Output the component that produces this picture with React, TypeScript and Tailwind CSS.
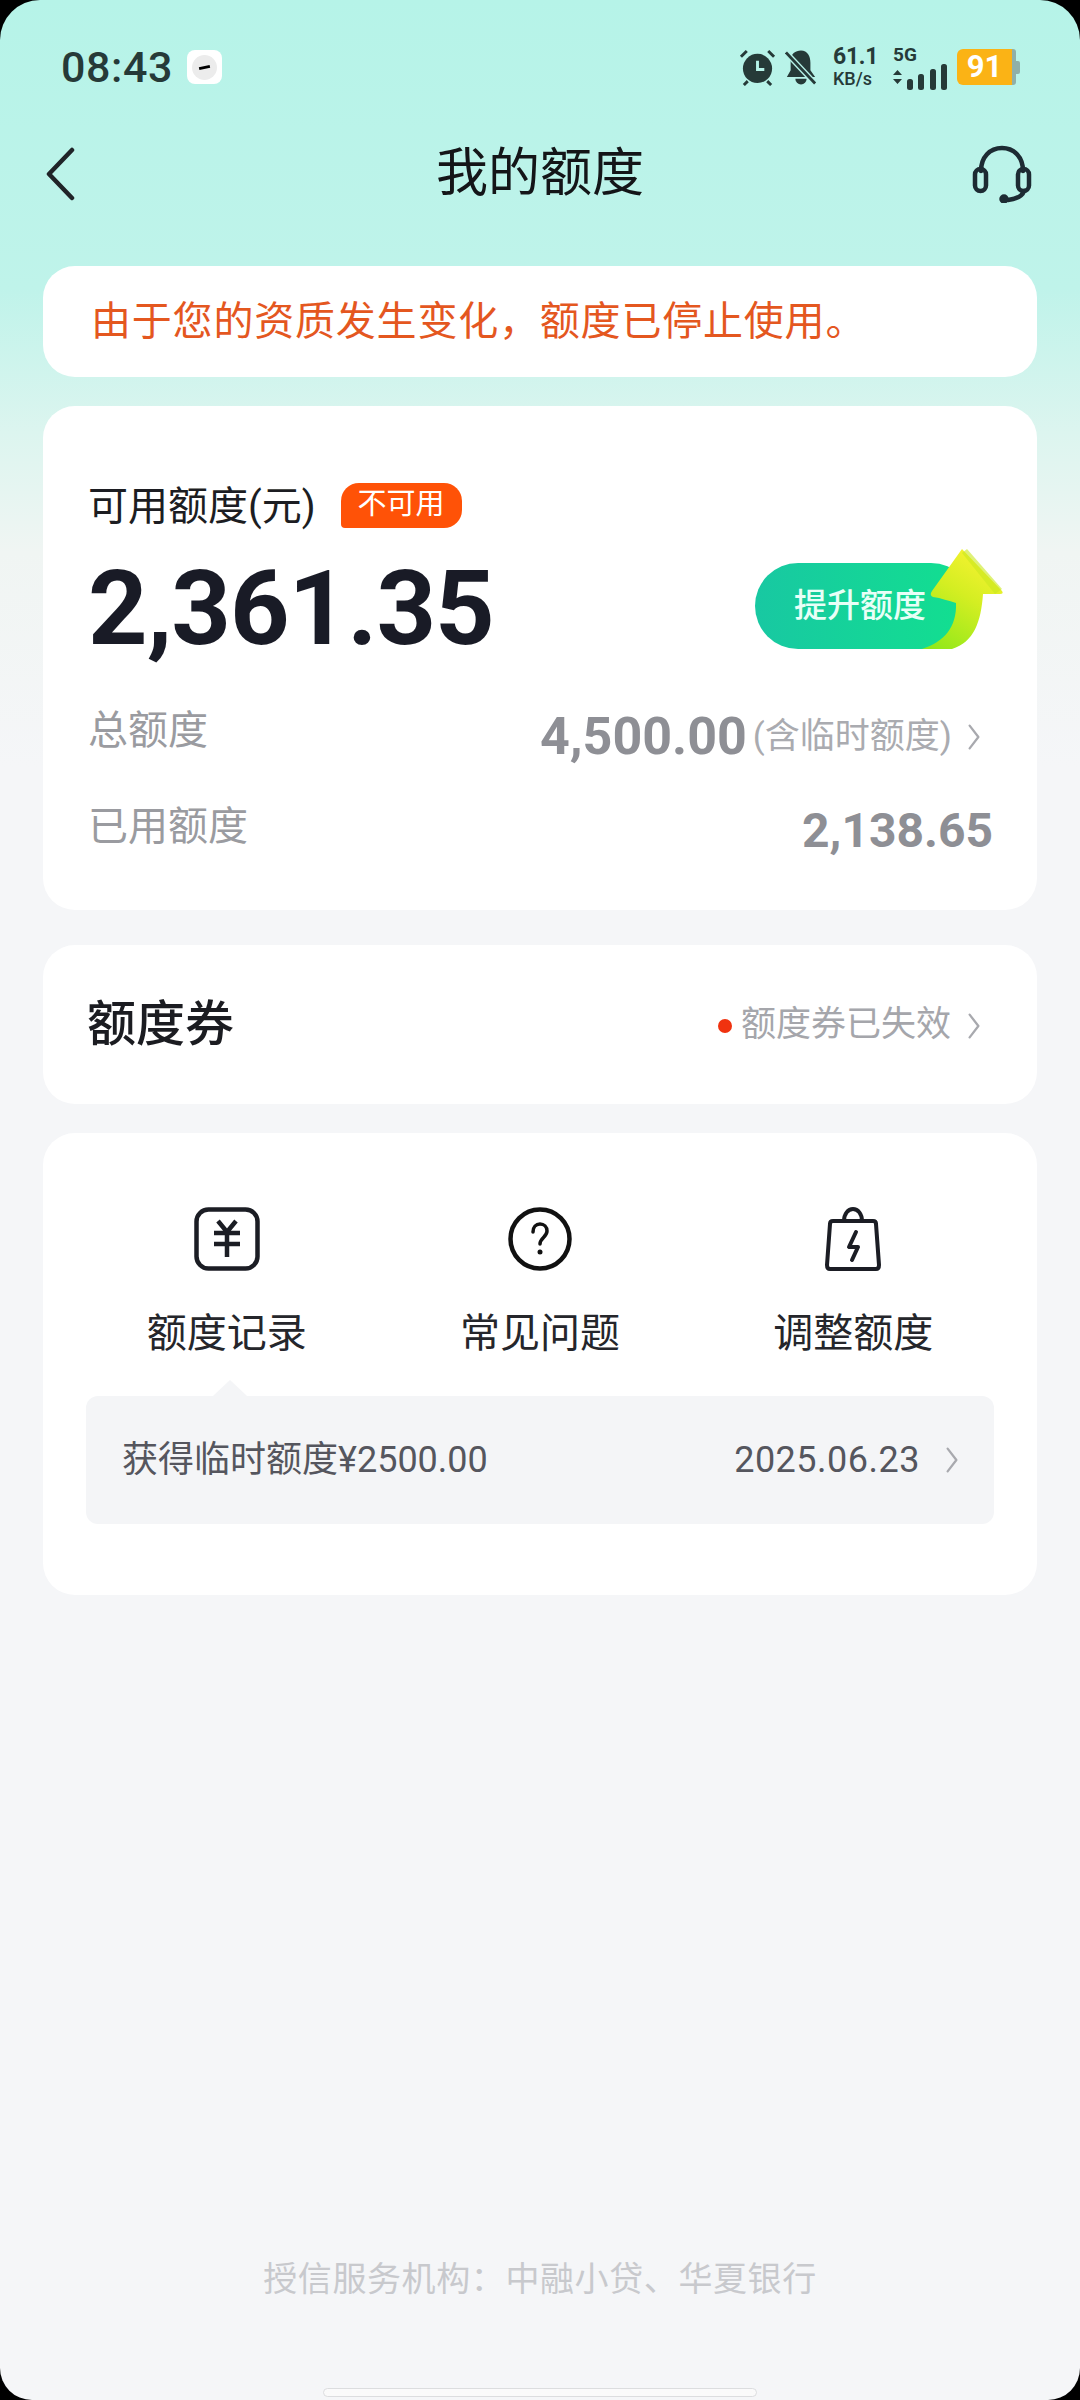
import React from 'react';

const CJK = "font-['Roboto','Noto_Sans_CJK_SC',sans-serif]";

const Chevron = ({ className }: { className: string }) => (
  <svg viewBox="0 0 16 32" fill="none" className={className}>
    <path d="M3 3 L13 16 L3 29" stroke="currentColor" strokeWidth="2.6" strokeLinecap="round" strokeLinejoin="round" />
  </svg>
);

const StatusBar = () => (
  <div className="h-[134px] pl-[61px] pr-[60px] pt-[44px] flex justify-between items-start text-[#263a38]">
    <div className="flex items-center gap-[14px] h-[46px]">
      <span className="text-[43px] leading-none font-medium tracking-[0.6px] font-['Roboto',sans-serif]">08:43</span>
      <div className="w-[35px] h-[34px] rounded-[8px] bg-white flex items-center justify-center">
        <div className="w-[25px] h-[25px] rounded-full bg-[#ececec] flex items-center justify-center">
          <div className="w-[11px] h-[3px] bg-black -rotate-12" />
        </div>
      </div>
    </div>
    <div className="flex items-center h-[46px]">
      <svg viewBox="0 0 38 38" className="w-[37px] h-[37px]">
        <circle cx="19" cy="20" r="15" fill="#263a38" />
        <path d="M19 12v9h7" stroke="#b6f3e8" strokeWidth="3" fill="none" />
        <path d="M2 8l6-6M36 8l-6-6M5 37l4-4M33 37l-4-4" stroke="#263a38" strokeWidth="3" />
      </svg>
      <svg viewBox="0 0 34 38" className="w-[32px] h-[37px] ml-[9px]">
        <path d="M17 1c7 0 10 6 10 13v8l5 7H2l4-7V11c0-6 5-10 11-10z" fill="#263a38" />
        <path d="M11 31h12a6 6 0 0 1-12 0z" fill="#263a38" />
        <path d="M1 3l31 33" stroke="#b6f3e8" strokeWidth="6" />
        <path d="M1 3l31 33" stroke="#263a38" strokeWidth="3" />
      </svg>
      <div className="ml-[16px] w-[43px] flex flex-col items-start font-['Roboto',sans-serif] font-bold">
        <span className="text-[23px] leading-[24px] tracking-[-0.3px]">61.1</span>
        <span className="text-[18px] leading-[20px] font-medium">KB/s</span>
      </div>
      <div className="ml-[17px] flex flex-col items-start font-['Roboto',sans-serif] font-bold">
        <span className="text-[19px] leading-[22px]">5G</span>
        <svg viewBox="0 0 55 26" className="w-[55px] h-[26px] -mt-[2px]">
          <path d="M0 11l4.500-5 4.500 5zM0 15l4.500 5 4.500-5z" fill="#263a38" />
          <rect x="14" y="15" width="6" height="11" rx="2.500" fill="#263a38" />
          <rect x="25" y="10" width="6" height="16" rx="2.500" fill="#263a38" />
          <rect x="37" y="5" width="6" height="21" rx="2.500" fill="#263a38" />
          <rect x="48" y="0" width="6" height="26" rx="2.500" fill="#263a38" />
        </svg>
      </div>
      <div className="ml-[9px] flex items-center">
        <div className="w-[55px] h-[36px] rounded-l-[6px] bg-[#fbb315] flex items-center justify-center text-white text-[31px] font-bold font-['Roboto',sans-serif]">91</div>
        <div className="w-[4px] h-[36px] bg-[#8fb0a8] rounded-r-[3px]" />
        <div className="w-[4px] h-[13px] bg-[#8fb0a8] rounded-r-[2px]" />
      </div>
    </div>
  </div>
);

const ToolEntry = ({ label, icon }: { label: string; icon: React.ReactNode }) => (
  <div className="flex flex-col items-center">
    <div className="h-[64px] flex items-center justify-center">{icon}</div>
    <span className="mt-[38px] text-[40px] leading-[50px] text-[#25262b]">{label}</span>
  </div>
);

export default function App() {
  return (
    <div className="bg-black w-[1080px] h-[2400px]">
      <div className={`relative w-[1080px] h-[2400px] overflow-hidden rounded-t-[40px] rounded-b-[32px] bg-[linear-gradient(180deg,#b6f3e8_0%,#bff3ea_12%,#dcf5ef_18%,#f0f5f3_23%,#f5f6f8_32%,#f5f6f8_100%)] ${CJK}`}>
        <StatusBar />

        {/* nav bar */}
        <div className="h-[76px] mt-[2px] flex items-center justify-between pl-[45px] pr-[48px] relative">
          <svg viewBox="0 0 30 54" className="w-[30px] h-[54px]">
            <path d="M27 3 L4 27 L27 51" stroke="#202428" strokeWidth="4.500" fill="none" strokeLinecap="round" strokeLinejoin="round" />
          </svg>
          <h1 className="absolute left-0 right-0 text-center text-[52px] leading-[76px] text-[#141518]">我的额度</h1>
          <svg viewBox="0 0 60 58" className="w-[60px] h-[58px]" fill="none" stroke="#1d2b33" strokeWidth="4.500" strokeLinecap="round">
            <path d="M9 26C9 12 18 3 30 3s21 9 21 23" />
            <rect x="3" y="24" width="11" height="22" rx="5.500" />
            <rect x="46" y="24" width="11" height="22" rx="5.500" />
            <path d="M52 46c-2 6-8 8-16 9" />
            <circle cx="32" cy="54" r="2.500" fill="#1d2b33" />
          </svg>
        </div>

        <div className="px-[43px] pt-[54px] flex flex-col">
          {/* notice */}
          <div className="h-[111px] rounded-[32px] bg-white flex items-center pl-[48px] text-[40px] tracking-[0.8px] text-[#e4571f]">
            由于您的资质发生变化，额度已停止使用。
          </div>

          {/* quota card */}
          <div className="mt-[29px] h-[504px] rounded-[32px] bg-white pl-[45px] pr-[44px] pt-[77px]">
            <div className="flex items-center h-[48px]">
              <span className="text-[40px] leading-[48px] text-[#1c1d22]">可用额度(元)</span>
              <span className="ml-[25px] -mt-[4px] w-[121px] h-[45px] rounded-[18px] rounded-bl-[4px] bg-[#ff5207] text-white text-[29px] flex items-center justify-center">不可用</span>
            </div>
            <div className="mt-[23px] flex items-center justify-between">
              <span className="text-[104px] leading-[110px] font-bold tracking-[-1px] text-[#191b26] font-['Roboto',sans-serif]">2,361.35</span>
              <div className="relative -mt-[6px] w-[219px] h-[86px] mr-[19px] rounded-full bg-[linear-gradient(90deg,#18c8a2,#12e08f)] flex items-center pl-[39px] text-[33px] font-medium text-[#e8fff7]">
                提升额度
                <svg viewBox="0 0 86 104" className="absolute left-[164px] bottom-[-2px] w-[86px] h-[104px]">
                  <defs>
                    <linearGradient id="arrowFill" x1="0.1" y1="1" x2="0.6" y2="0">
                      <stop offset="0" stopColor="#8fe81a" />
                      <stop offset="0.6" stopColor="#d4ee22" />
                      <stop offset="1" stopColor="#f4f230" />
                    </linearGradient>
                  </defs>
                  <path d="M43 2 L83 44 Q85 47 81 47 L64 47 C62 75 55 95 33 102 L3 102 C25 95 38 80 37 56 C30 54 22 51 14 50 Q10 48 13 44 Z" fill="url(#arrowFill)" />
                  <path d="M48 2 L83 42 L76 47 L43 6 Z" fill="#c9e81f" opacity="0.6" />
                </svg>
              </div>
            </div>
            <div className="mt-[37px] flex items-center justify-between h-[60px]">
              <span className="text-[40px] text-[#9a9ba0]">总额度</span>
              <div className="flex items-center pt-[12px]">
                <span className="text-[52px] font-bold text-[#8e8f95] font-['Roboto',sans-serif]">4,500.00</span>
                <span className="ml-[6px] text-[35px] text-[#aaabb0]">(含临时额度)</span>
                <Chevron className="ml-[15px] mr-[12px] w-[14px] h-[28px] text-[#a8a9ae]" />
              </div>
            </div>
            <div className="mt-[36px] flex items-center justify-between h-[60px]">
              <span className="text-[40px] text-[#9a9ba0]">已用额度</span>
              <span className="pt-[7px] text-[48px] font-bold text-[#8e8f95] font-['Roboto',sans-serif]">2,138.65</span>
            </div>
          </div>

          {/* coupon row */}
          <div className="mt-[35px] h-[159px] rounded-[32px] bg-white pl-[44px] pr-[56px] flex items-center justify-between">
            <span className="text-[49px] font-medium text-[#1b1c21]">额度券</span>
            <div className="flex items-center pt-[2px]">
              <span className="w-[14px] h-[14px] rounded-full bg-[#f0320f]" />
              <span className="ml-[9px] text-[35px] text-[#a5a6ab]">额度券已失效</span>
              <Chevron className="ml-[16px] w-[14px] h-[28px] text-[#a8a9ae]" />
            </div>
          </div>

          {/* tools card */}
          <div className="mt-[29px] h-[462px] rounded-[32px] bg-white px-[43px] pt-[74px]">
            <div className="grid grid-cols-3 -mx-[16px]">
              <ToolEntry
                label="额度记录"
                icon={
                  <svg viewBox="0 0 66 64" className="w-[66px] h-[64px]" fill="none" stroke="#1b1d24" strokeWidth="4.500">
                    <rect x="2.500" y="2.500" width="61" height="59" rx="12" />
                    <path d="M24 14l9 11 9-11M20 26h26M20 37h26M33 25v25" strokeWidth="4.500" />
                  </svg>
                }
              />
              <ToolEntry
                label="常见问题"
                icon={
                  <svg viewBox="0 0 64 64" className="w-[64px] h-[64px]" fill="none" stroke="#111" strokeWidth="4.500">
                    <circle cx="32" cy="32" r="29.500" />
                    <path d="M25 25c0-5 3-8 7-8s7 3 7 7c0 6-7 7-7 13" strokeLinecap="round" strokeWidth="3.500" />
                    <circle cx="32" cy="45" r="2.500" fill="#111" stroke="none" />
                  </svg>
                }
              />
              <ToolEntry
                label="调整额度"
                icon={
                  <svg viewBox="0 0 56 64" className="w-[56px] h-[64px]" fill="none" stroke="#1b1d24" strokeWidth="4" strokeLinejoin="round">
                    <path d="M19 14c0-7 4-12 9-12s9 5 9 12" />
                    <path d="M8 14h40c2 0 3 1 3 3l3 41c0 3-1 4-3 4H5c-2 0-3-1-3-4l3-41c0-2 1-3 3-3z" />
                    <path d="M31 25l-7 15h9l-6 13" strokeLinecap="round" />
                  </svg>
                }
              />
            </div>
            <div className="relative mt-[37px] h-[128px] rounded-[12px] bg-[#f4f5f7] flex items-center justify-between pl-[36px] pr-[34px] text-[36px] text-[#55565e]">
              <span className="absolute left-[127px] -top-[16px] w-0 h-0 border-x-[17px] border-x-transparent border-b-[16px] border-b-[#f4f5f7]" />
              <span>获得临时额度¥2500.00</span>
              <div className="flex items-center">
                <span className="tracking-[0.5px]">2025.06.23</span>
                <Chevron className="ml-[24px] w-[16px] h-[28px] text-[#a8a9ae]" />
              </div>
            </div>
          </div>
        </div>

        <div className="absolute left-0 right-0 top-[2253px] text-center text-[34px] leading-[52px] text-[#c8c9cd] tracking-[0.6px]">
          授信服务机构：中融小贷、华夏银行
        </div>
        <div className="absolute left-[323px] top-[2388px] w-[434px] h-[9px] rounded-full bg-[#fafafa] border border-[#dcdddf]" />
      </div>
    </div>
  );
}
